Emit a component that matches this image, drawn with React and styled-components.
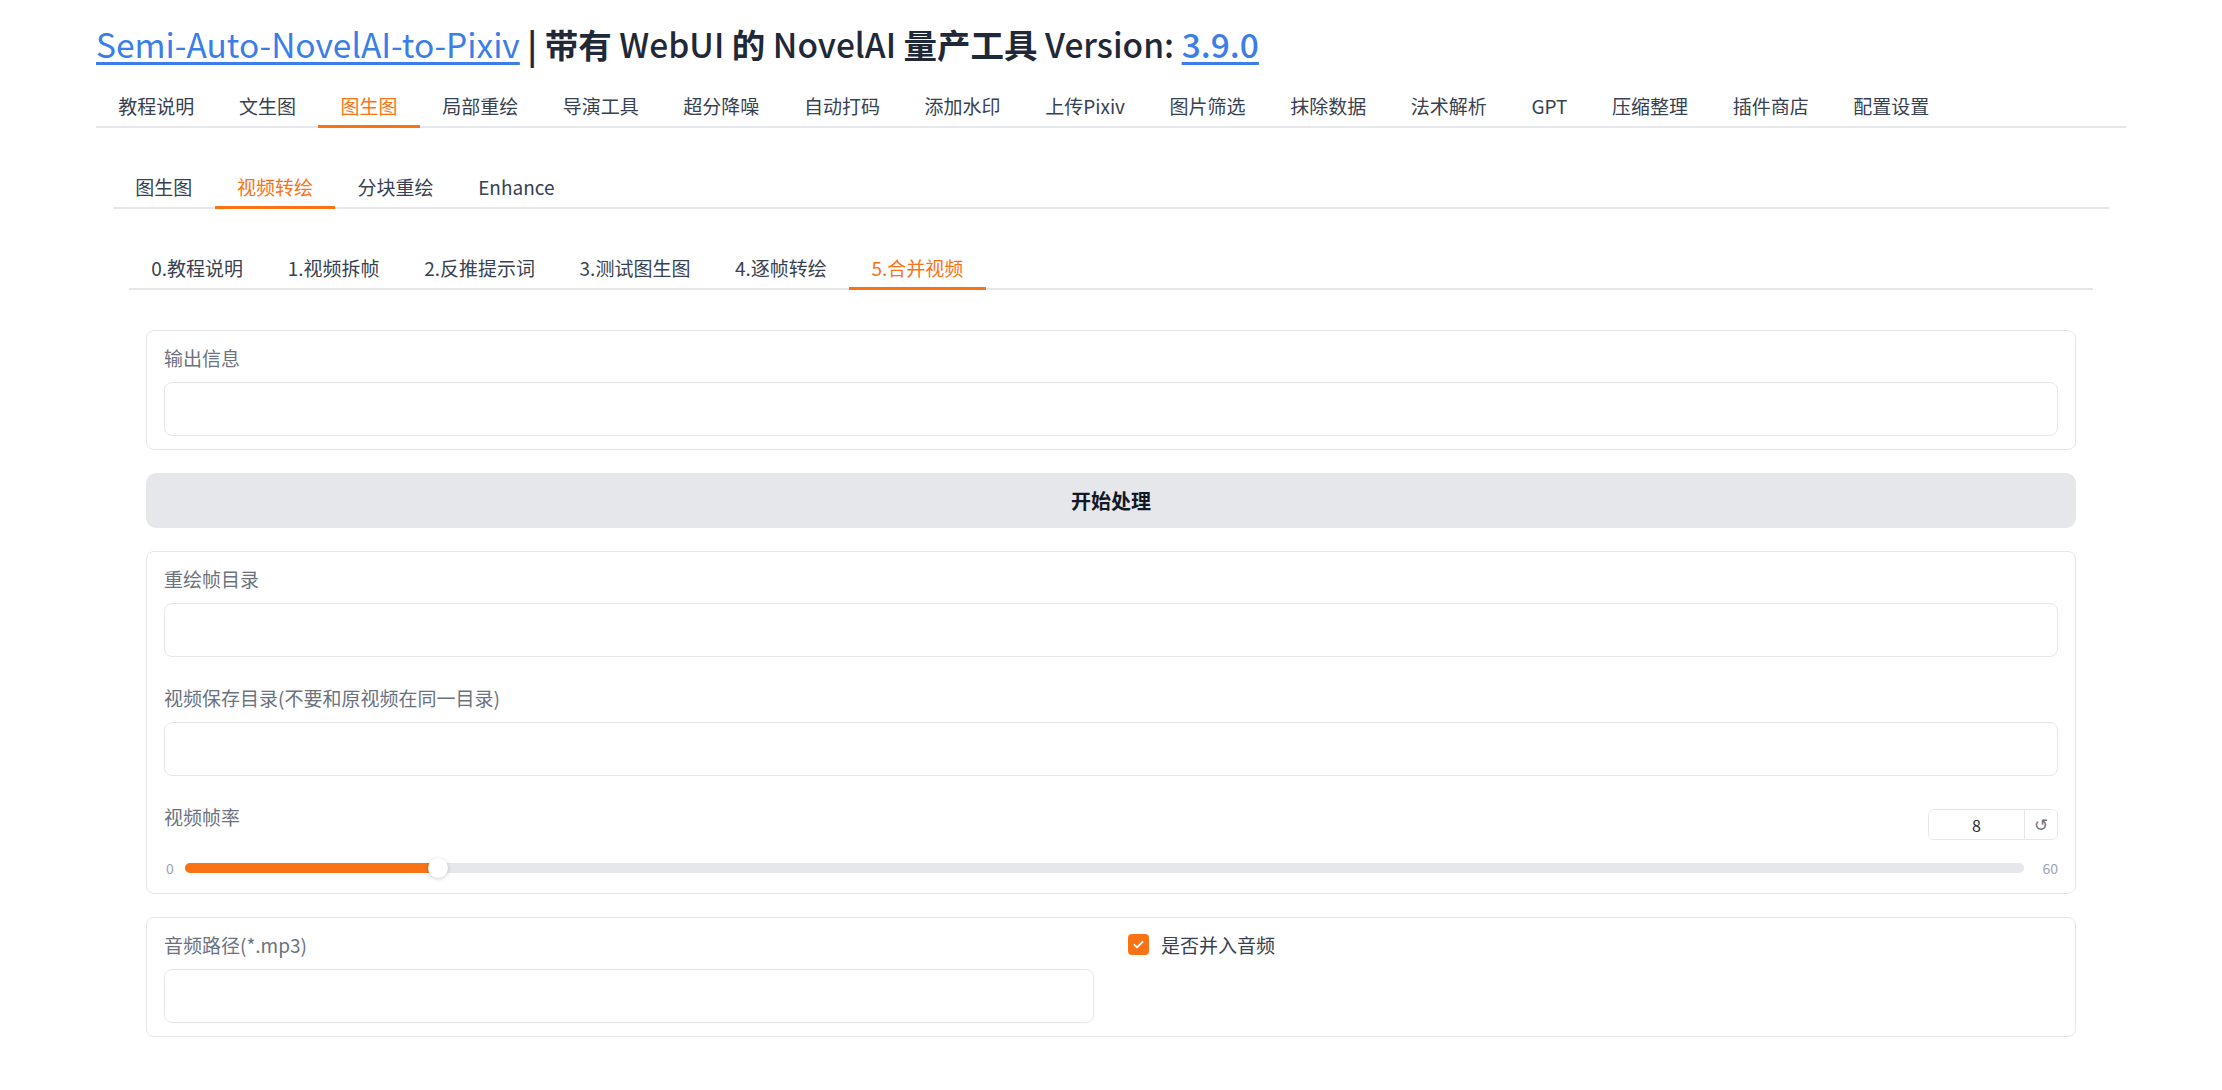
import React, { useState } from "react";
import styled, { createGlobalStyle } from "styled-components";

const ORANGE = "#f97316";

const GlobalStyle = createGlobalStyle`
    body {
        margin: 0;
        background: #fff;
        font-family: "Noto Sans CJK SC", "Noto Sans", sans-serif;
    }
    * { box-sizing: border-box; }
`;

const Page = styled.div`
    padding: 23px 96px 40px;
`;

const Title = styled.h1`
    margin: 0 0 20px;
    font-size: 33.5px;
    line-height: 42px;
    font-weight: 500;
    color: #1f2937;
    white-space: nowrap;
`;

const TitleLink = styled.a`
    color: #3b7ee8;
    font-weight: ${(p) => p.$weight || 400};
    text-decoration: underline;
    text-underline-offset: 4px;
`;

const Strong = styled.span`
    font-weight: 700;
`;

const TabNav = styled.div`
    display: flex;
    border-bottom: 2px solid #e5e7eb;
`;

const TabButton = styled.button`
    position: relative;
    height: 41px;
    padding: 0 22.3px;
    border: none;
    background: none;
    font-family: inherit;
    font-size: 19px;
    color: ${(p) => (p.$active ? ORANGE : "#374151")};
    cursor: pointer;

    &::after {
        content: "";
        display: ${(p) => (p.$active ? "block" : "none")};
        position: absolute;
        left: 0;
        right: 0;
        bottom: -2px;
        height: 3px;
        background: ${ORANGE};
    }
`;

const TabPanel = styled.div`
    padding: ${(p) => p.$pad};
`;

const Stack = styled.div`
    display: flex;
    flex-direction: column;
    gap: 23px;
`;

const Block = styled.div`
    border: 1px solid #e5e7eb;
    border-radius: 8px;
    background: #fff;
    padding: 13px 17px;
`;

const Field = styled.div`
    display: flex;
    flex-direction: column;

    & + & {
        margin-top: 27px;
    }
`;

const Label = styled.div`
    font-size: 19px;
    line-height: 27px;
    color: #6b7280;
    margin-bottom: ${(p) => (p.$flat ? "0" : "11px")};
`;

const TextBox = styled.input`
    width: 100%;
    height: 54px;
    border: 1px solid #e5e7eb;
    border-radius: 8px;
    outline: none;
    padding: 0 14px;
    font-family: inherit;
    font-size: 18px;
`;

const ProcessBtn = styled.button`
    height: 55px;
    border: none;
    border-radius: 10px;
    background: #e5e7eb;
    font-family: inherit;
    font-size: 20px;
    font-weight: 700;
    color: #111827;
`;

const SliderHead = styled.div`
    display: flex;
    justify-content: space-between;
    align-items: flex-start;
`;

const NumberBox = styled.div`
    display: flex;
    width: 130px;
    height: 31px;
    margin-top: 6px;
    border: 1px solid #e5e7eb;
    border-radius: 6px;
    overflow: hidden;
`;

const NumInput = styled.input`
    width: 95px;
    border: none;
    outline: none;
    text-align: center;
    font-family: inherit;
    font-size: 16px;
    color: #1f2937;
`;

const ResetBtn = styled.button`
    flex: 1;
    border: none;
    border-left: 1px solid #e5e7eb;
    background: #fff;
    color: #6b7280;
    font-family: "DejaVu Sans", sans-serif;
    font-size: 17px;
    padding: 0;
`;

const SliderRow = styled.div`
    display: flex;
    align-items: center;
    height: 20px;
    margin: 18px 0 2px;
`;

const RangeText = styled.span`
    font-size: 14px;
    color: #9ca3af;
    width: ${(p) => p.$w};
    padding-left: ${(p) => p.$pl || "0"};
    text-align: ${(p) => p.$align || "left"};
`;

const Track = styled.div`
    position: relative;
    flex: 1;
    height: 10px;
    border-radius: 5px;
    background: #e5e7eb;
`;

const Fill = styled.div`
    height: 100%;
    border-radius: 5px;
    background: ${ORANGE};
`;

const Thumb = styled.div`
    position: absolute;
    top: 50%;
    width: 20px;
    height: 20px;
    border-radius: 50%;
    background: #fff;
    box-shadow: 0 1px 4px rgba(0, 0, 0, 0.2);
    transform: translate(-50%, -50%);
`;

const TwoCols = styled.div`
    display: grid;
    grid-template-columns: 1fr 1fr;
    column-gap: 34px;
`;

const CheckRow = styled.label`
    display: flex;
    align-items: center;
    gap: 12px;
    height: 27px;
    font-size: 19px;
    color: #374151;
`;

const CheckBox = styled.span`
    display: flex;
    align-items: center;
    justify-content: center;
    width: 21px;
    height: 21px;
    border-radius: 4px;
    background: ${ORANGE};
`;

const mainTabs = ["教程说明", "文生图", "图生图", "局部重绘", "导演工具", "超分降噪", "自动打码", "添加水印", "上传Pixiv", "图片筛选", "抹除数据", "法术解析", "GPT", "压缩整理", "插件商店", "配置设置"];
const subTabs = ["图生图", "视频转绘", "分块重绘", "Enhance"];
const stepTabs = ["0.教程说明", "1.视频拆帧", "2.反推提示词", "3.测试图生图", "4.逐帧转绘", "5.合并视频"];

const Tabs = ({ items, active }) => (
    <TabNav>
        {items.map((t) => (
            <TabButton key={t} $active={t === active}>{t}</TabButton>
        ))}
    </TabNav>
);

const App = () => {
    const [fps] = useState(8);
    const ratio = fps / 60;
    // thumb travels inside the track, so offset by half its width
    const pos = `calc(${ratio} * (100% - 20px) + 10px)`;

    return (
        <Page>
            <GlobalStyle />
            <Title>
                <TitleLink href="#">Semi-Auto-NovelAI-to-Pixiv</TitleLink> <Strong>|</Strong> <Strong>带有</Strong> WebUI <Strong>的</Strong> NovelAI <Strong>量产工具</Strong> Version: <TitleLink href="#" $weight={500}>3.9.0</TitleLink>
            </Title>

            <Tabs items={mainTabs} active="图生图" />
            <TabPanel $pad="38px 17px 0">
                <Tabs items={subTabs} active="视频转绘" />
                <TabPanel $pad="38px 16px 0">
                    <Tabs items={stepTabs} active="5.合并视频" />
                    <TabPanel $pad="40px 17px 0">
                        <Stack>
                            <Block>
                                <Field>
                                    <Label>输出信息</Label>
                                    <TextBox readOnly />
                                </Field>
                            </Block>

                            <ProcessBtn>开始处理</ProcessBtn>

                            <Block>
                                <Field>
                                    <Label>重绘帧目录</Label>
                                    <TextBox />
                                </Field>
                                <Field>
                                    <Label>视频保存目录(不要和原视频在同一目录)</Label>
                                    <TextBox />
                                </Field>
                                <Field>
                                    <SliderHead>
                                        <Label $flat>视频帧率</Label>
                                        <NumberBox>
                                            <NumInput value={fps} readOnly />
                                            <ResetBtn>↺</ResetBtn>
                                        </NumberBox>
                                    </SliderHead>
                                    <SliderRow>
                                        <RangeText $w="21px" $pl="2px">0</RangeText>
                                        <Track>
                                            <Fill style={{ width: pos }} />
                                            <Thumb style={{ left: pos }} />
                                        </Track>
                                        <RangeText $w="34px" $align="right">60</RangeText>
                                    </SliderRow>
                                </Field>
                            </Block>

                            <Block>
                                <TwoCols>
                                    <Field>
                                        <Label>音频路径(*.mp3)</Label>
                                        <TextBox />
                                    </Field>
                                    <div>
                                        <CheckRow>
                                            <CheckBox>
                                                <svg width="13" height="13" viewBox="0 0 16 16" fill="none">
                                                    <path d="M3 8.5l3.2 3L13 4.8" stroke="#fff" strokeWidth="2.4" strokeLinecap="round" strokeLinejoin="round" />
                                                </svg>
                                            </CheckBox>
                                            是否并入音频
                                        </CheckRow>
                                    </div>
                                </TwoCols>
                            </Block>
                        </Stack>
                    </TabPanel>
                </TabPanel>
            </TabPanel>
        </Page>
    );
};

export default App;
